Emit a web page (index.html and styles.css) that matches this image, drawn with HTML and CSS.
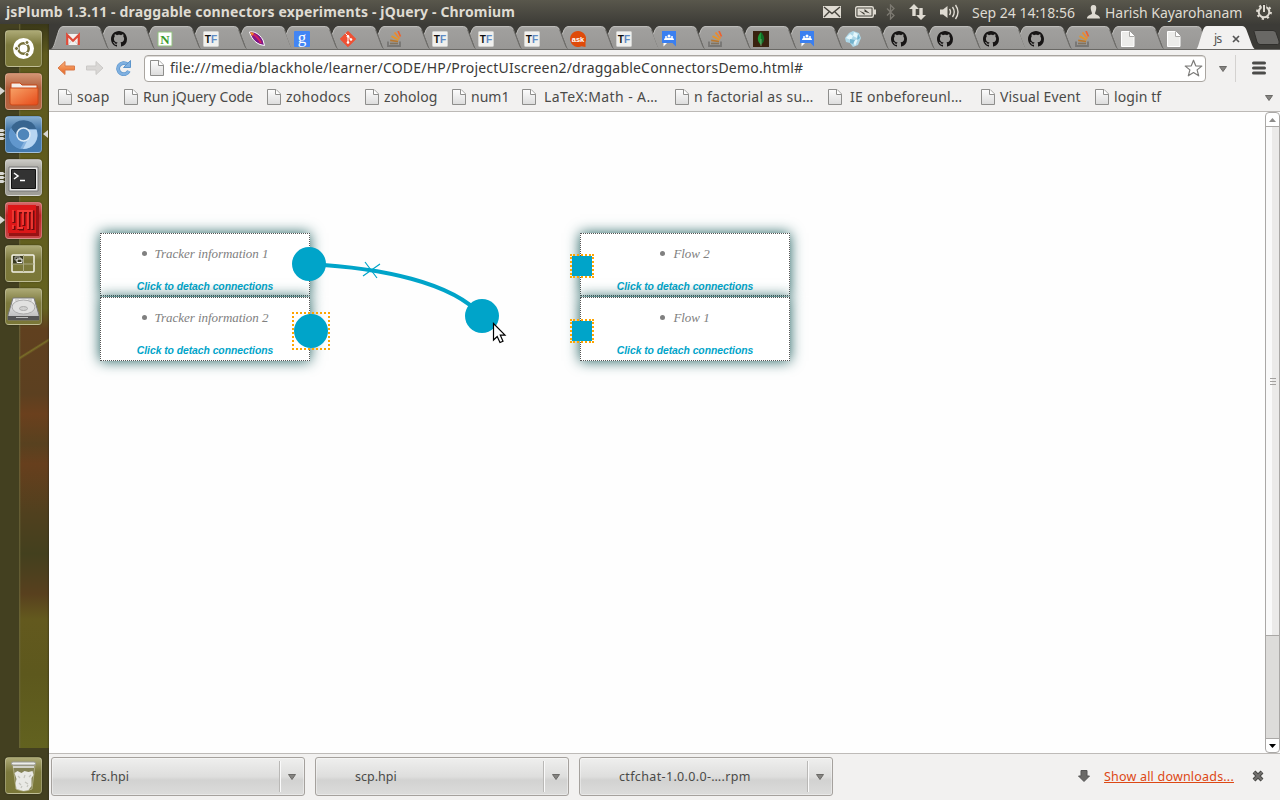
FILE: index.html
```html
<!DOCTYPE html>
<html lang="en">
<head>
<meta charset="utf-8">
<title>jsPlumb 1.3.11 - draggable connectors experiments - jQuery</title>
<link rel="stylesheet" href="styles.css">
</head>
<body>
<svg class="defs" width="0" height="0" aria-hidden="true">
  <defs>
    <linearGradient id="tabFill" x1="0" y1="0" x2="0" y2="1"><stop offset="0" stop-color="#a9a8a6"/><stop offset=".15" stop-color="#a09f9d"/><stop offset="1" stop-color="#989795"/></linearGradient>
    <linearGradient id="pageFill" x1="0" y1="0" x2="0" y2="1"><stop offset="0" stop-color="#fdfdfd"/><stop offset="1" stop-color="#dcdcdc"/></linearGradient>
    <linearGradient id="orange" x1="0" y1="0" x2="0" y2="1"><stop offset="0" stop-color="#f9b27c"/><stop offset="1" stop-color="#e8641f"/></linearGradient>
    <linearGradient id="folder" x1="0" y1="0" x2="1" y2="1"><stop offset="0" stop-color="#f7a267"/><stop offset="1" stop-color="#e64a19"/></linearGradient>
    <linearGradient id="metal" x1="0" y1="0" x2="0" y2="1"><stop offset="0" stop-color="#f4f4f4"/><stop offset="1" stop-color="#b5b5b5"/></linearGradient>
  </defs>
  <symbol id="tab-first" viewBox="0 0 62 24"><path d="M2 23.5C5 22.500 5 20 10 4Q11.500.5 14 .5H47.500Q50 .5 51.500 3.500L57.500 19.500Q59 23 60.500 23.500Z" fill="url(#tabFill)"/><path d="M2.500 23C5 22 6 16 10 4Q11.500.5 14 .5H47.500Q50 .5 51.500 3.500" fill="none" stroke="#bdbcba"/><path d="M51.500 3.500L57.500 19.500Q58.500 22.500 60.500 23.500" fill="none" stroke="#6f6e6b"/></symbol>
  <symbol id="tab-next" viewBox="0 0 62 24"><path d="M14 23.500L12.500 20.500L8 8.500L10 3.500Q11.500.5 14 .5H47.500Q50 .5 51.500 3.500L57.500 19.500Q59 23 60.500 23.500Z" fill="url(#tabFill)"/><path d="M8.500 8L10 4Q11.500.5 14 .5H47.500Q50 .5 51.500 3.500" fill="none" stroke="#bdbcba"/><path d="M51.500 3.500L57.500 19.500Q58.500 22.500 60.500 23.500" fill="none" stroke="#6f6e6b"/></symbol>
  <symbol id="i-gmail" viewBox="0 0 16 16"><path d="M1 3h14v11H1z" fill="#f3f0ee"/><path d="M3 14L7 9M13 14L9 9" stroke="#cfcfcf"/><path d="M2.200 14V4L8 9.700 13.800 4V14" fill="none" stroke="#dd4b39" stroke-width="2.300"/></symbol>
  <symbol id="i-github" viewBox="0 0 16 16"><path fill="#171515" d="M8 0C3.580 0 0 3.580 0 8c0 3.540 2.290 6.530 5.470 7.590.4.070.55-.17.55-.38 0-.19-.01-.82-.01-1.490-2.010.37-2.530-.49-2.690-.94-.09-.23-.48-.94-.82-1.130-.28-.15-.68-.52-.01-.53.63-.01 1.080.58 1.230.82.72 1.210 1.870.87 2.330.66.070-.52.28-.87.51-1.070-1.780-.2-3.640-.89-3.640-3.950 0-.87.31-1.590.82-2.150-.08-.2-.36-1.020.08-2.120 0 0 .67-.21 2.200.82.64-.18 1.320-.27 2-.27s1.360.09 2 .27c1.530-1.040 2.200-.82 2.200-.82.44 1.100.16 1.920.08 2.120.51.56.82 1.270.82 2.150 0 3.070-1.870 3.750-3.650 3.950.29.25.54.73.54 1.480 0 1.070-.01 1.930-.01 2.200 0 .21.15.46.55.38A8.010 8.010 0 0 0 16 8c0-4.420-3.580-8-8-8z"/></symbol>
  <symbol id="i-n" viewBox="0 0 16 16"><path d="M1 1h14v14H1z" fill="#fff" stroke="#8fc07c"/><text x="8" y="12.500" text-anchor="middle" class="g-serif" font-size="13" fill="#3a9a2c">N</text></symbol>
  <symbol id="i-tf" viewBox="0 0 16 16"><rect x=".5" y=".5" width="15" height="15" rx="1" fill="#f0f0ee" stroke="#d2d2d0"/><text x="1.800" y="12" class="g-sans" font-size="11" textLength="12.400" lengthAdjust="spacingAndGlyphs" fill="#111">T<tspan fill="#5e8ac4">F</tspan></text></symbol>
  <symbol id="i-feather" viewBox="0 0 16 16"><path d="M.5 1C4 0 10 2 14 9L15.500 14.500 11 13.500C5 11 2 6 .5 1Z" fill="#7c1688" stroke="#fff"/><path d="M3 3C7 4 10 8 12 12" stroke="#d0225f" stroke-width="2" fill="none"/><path d="M1 1l4 1-2 3z" fill="#f08a24"/></symbol>
  <symbol id="i-google" viewBox="0 0 16 16"><rect width="16" height="16" rx="1" fill="#4285f4"/><text x="8" y="11.500" text-anchor="middle" class="g-thin" font-size="17" fill="#fff">g</text></symbol>
  <symbol id="i-git" viewBox="0 0 16 16"><path d="M8 .3L15.700 8 8 15.700.3 8z" fill="#f05033" stroke="#f05033" stroke-linejoin="round"/><path d="M5.500 2.500L8 5v7M8 5.500L11 8.500" stroke="#fff" fill="none"/><circle cx="8" cy="5.300" r="1.300" fill="#fff"/><circle cx="8" cy="11.500" r="1.300" fill="#fff"/><circle cx="11" cy="8.500" r="1.300" fill="#fff"/></symbol>
  <symbol id="i-so" viewBox="0 0 16 16"><path d="M2 10.500V15H14V10.500" fill="none" stroke="#777674" stroke-width="1.800"/><path d="M4 12.500h8" stroke="#84735c" stroke-width="1.600"/><path d="M4.200 9.300L12 10.500" stroke="#b9772d" stroke-width="1.700"/><path d="M5.500 5.200L12.500 9" stroke="#e2942d" stroke-width="1.900"/><path d="M8.500 1.500L13.500 7.500" stroke="#ee8a2c" stroke-width="1.900"/><path d="M12 0L14.500 5.500" stroke="#f0602d" stroke-width="1.700"/></symbol>
  <symbol id="i-ask" viewBox="0 0 16 16"><path d="M8 0a8 8 0 1 0 3.500 15.200L15.500 16V11A8 8 0 0 0 8 0Z" fill="#df4a0a"/><text x="8" y="10.800" text-anchor="middle" class="g-sans" font-size="7.500" fill="#fff">ask</text></symbol>
  <symbol id="i-groups" viewBox="0 0 16 16"><path d="M1 0h14v15.500L11.500 12H1z" fill="#3a7ff0"/><path d="M2.500 12v3.500L6 12z" fill="#fff"/><g fill="#fff"><circle cx="8" cy="5" r="1.500"/><circle cx="5" cy="6" r="1"/><circle cx="11" cy="6" r="1"/><path d="M3 9c0-3 4-2 5-2s5-1 5 2z"/></g></symbol>
  <symbol id="i-mongo" viewBox="0 0 16 16"><path d="M0 0h16v16H0z" fill="#39220f"/><path d="M8 1C3.500 6 4 10 8 14z" fill="#1e9b38"/><path d="M8 1c4.500 5 4 9 0 13z" fill="#126d27"/><path d="M8 8v7" stroke="#9bb38d" stroke-width=".7"/></symbol>
  <symbol id="i-crystal" viewBox="0 0 16 16"><path d="M0 7L4 2 8 0 14 2 16 7 13 14 8 16 5 12 1 11z" fill="#aed7e7"/><path d="M1 7L5 3 8 5 6 9zM9 1l4 2-1 4-4-2zM8 10l5-2-3 7z" fill="#e5f7fc"/><path d="M5 8l5 1-2 4-3-1zM13 3l2 4-3 2z" fill="#73b3cd"/></symbol>
  <symbol id="i-file" viewBox="0 0 16 16"><path d="M1.500.5h8.500L14.500 5V15.500h-13z" fill="url(#pageFill)" stroke="#8e8e8c"/><path d="M9.500.5V5.500h5" fill="#fff" stroke="#8e8e8c"/></symbol>
  <symbol id="i-filetab" viewBox="0 0 16 16"><path d="M1.500.5h8L14 5V15.500H1.500z" fill="#ececea" stroke="#fff"/><path d="M9.500.5V5.500h5" fill="#fff" stroke="#a9a8a6"/></symbol>
  <symbol id="i-drop" viewBox="0 0 8 6"><path d="M.5.5h7L4 5.500z" fill="#858481" stroke="#6b6a67"/></symbol>
</svg>

<header class="panel">
  <span class="win-title">jsPlumb 1.3.11 - draggable connectors experiments - jQuery - Chromium</span>
  <div class="indicators">
    <svg class="ind mail" viewBox="0 0 18 12"><rect width="18" height="12" fill="#dfdbd2"/><path d="M1 1L9 7.500 17 1M1 11L6 6M17 11L12 6" fill="none" stroke="#45433c" stroke-width="1.400"/></svg>
    <svg class="ind battery" viewBox="0 0 21 12"><rect x=".7" y=".7" width="17.600" height="10.600" rx="1.500" fill="none" stroke="#dfdbd2" stroke-width="1.400"/><path d="M19 3.500h2v5h-2z" fill="#dfdbd2"/><path d="M2.500 2.500h14v7h-14z" fill="#dfdbd2"/><path d="M4 4.500L9.500 7V3L15 7.500 9.500 5.800V9z" fill="#403e37"/></svg>
    <svg class="ind bt" viewBox="0 0 9 16"><path d="M1 4.500L8 11.500 4.500 15V1L8 4.500 1 11.500" fill="none" stroke="#7d7a72" stroke-width="1.300"/></svg>
    <svg class="ind net" viewBox="0 0 17 16"><path d="M5 0L10 5H6.700V12H3.300V5H0zM12 16L7 11h3.300V4h3.400v7H17z" fill="#dfdbd2"/></svg>
    <svg class="ind vol" viewBox="0 0 20 16"><path d="M0 5.500h3L7.500 2v12L3 10.500H0z" fill="#dfdbd2"/><path d="M9.500 5Q11.500 8 9.500 11M12.500 3Q16 8 12.500 13M15.500 1Q20.500 8 15.500 15" fill="none" stroke="#dfdbd2" stroke-width="1.400"/></svg>
    <span class="clock">Sep 24 14:18:56</span>
    <svg class="ind user" viewBox="0 0 13 14"><path d="M6.500 0C9 0 9.500 2 9.200 4 9 6 8 7 8 8.500 8.500 10 13 10 13 13.500H0C0 10 4.500 10 5 8.500 5 7 4 6 3.800 4 3.500 2 4 0 6.500 0Z" fill="#dfdbd2"/></svg>
    <span class="username">Harish Kayarohanam</span>
    <svg class="ind gear" viewBox="0 0 16 16"><circle cx="8" cy="8" r="5.300" fill="none" stroke="#dfdbd2" stroke-width="2"/><circle cx="8" cy="8" r="6.900" fill="none" stroke="#dfdbd2" stroke-width="2" stroke-dasharray="2.200 3.220"/><path d="M5.800 0h4.400v8H5.800z" fill="#47453d"/><path d="M8 1v7" stroke="#dfdbd2" stroke-width="2"/></svg>
  </div>
</header>

<div class="desktop">
<nav class="launcher">
  <div class="tile olive"><svg viewBox="0 0 37 37"><circle cx="18.500" cy="18.500" r="10.500" fill="#fff"/><circle cx="18.500" cy="18.500" r="5.200" fill="none" stroke="#77713b" stroke-width="2.500"/><g fill="#77713b" stroke="#fff"><circle cx="11.500" cy="18.500" r="2"/><circle cx="22" cy="12.500" r="2"/><circle cx="22" cy="24.500" r="2"/></g></svg></div>
  <div class="tile rust"><svg viewBox="0 0 37 37"><path d="M6 10h9l2 2h15v10H6z" fill="#f4eee9" stroke="#c74717"/><path d="M5 15h28v15Q33 32 31 32H7Q5 32 5 30z" fill="url(#folder)" stroke="#ca4818"/></svg><i class="run-left"></i></div>
  <div class="tile blue"><svg viewBox="0 0 37 37"><circle cx="18.500" cy="19" r="14" fill="#86b2de"/><path d="M6 12A14 14 0 0 1 31.500 13H18.500L13 21z" fill="#38658f"/><path d="M18 33L24 21 24 14H31.500A14 14 0 0 1 18 33Z" fill="#b8d6f2"/><path d="M6 12L13 22L19 26 15 33A14 14 0 0 1 6 12" fill="#6197cd"/><circle cx="18.500" cy="18.500" r="6.500" fill="#4f86ba" stroke="#dceaf6" stroke-width="1.500"/></svg><i class="run-multi"></i><i class="active-mark"></i></div>
  <div class="tile grey"><svg viewBox="0 0 37 37"><path d="M4 8h29v24H4z" fill="#e9e9e7" stroke="#777"/><path d="M6.500 10.500h24v19h-24z" fill="#333" stroke="#111"/><path d="M9 14l4 3-4 3M15 21.500h5" fill="none" stroke="#fff" stroke-width="1.500"/></svg><i class="run-multi"></i></div>
  <div class="tile red"><svg viewBox="0 0 37 37"><path d="M4 4h30v30H4z" fill="#981314"/><path d="M3 3h28v28H3z" fill="#dc1718"/><path d="M9 9v12M9 24v4M14 28V10h14v18M19 10v14M24 10v18M14 27h5" fill="none" stroke="#6c0c0d" stroke-width="3"/><path d="M8 8v12M8 23v4M13 27V9h14v18M18 9v14M23 9v18M13 26h5" fill="none" stroke="#f53b35" stroke-width="1.800"/></svg><i class="run-left"></i></div>
  <div class="tile olive"><svg viewBox="0 0 37 37"><path d="M8 11h10v8H8z" fill="#37371e"/><rect x="7" y="10" width="22" height="17" rx="1" fill="none" stroke="#f3f2e8" stroke-width="1.500"/><path d="M18.500 10v17M7 19h22" stroke="#aba984"/><path d="M10 12h5v3h-5z" fill="none" stroke="#aaa"/><path d="M12 14h5v3.500h-5z" fill="#39381e" stroke="#fff"/></svg></div>
  <div class="tile olive"><svg viewBox="0 0 37 37"><path d="M8 10h21l5 17v5H3v-5z" fill="url(#metal)" stroke="#777"/><path d="M3 28h31v4H3z" fill="#555"/><ellipse cx="18.500" cy="19" rx="11.500" ry="7" fill="#e1e1e0" stroke="#aaa"/><ellipse cx="18.500" cy="20.500" rx="4" ry="2" fill="#d0d0cf" stroke="#aaa"/><path d="M10 12h4M23 12h4M11 29.500h12" stroke="#bbb"/></svg></div>
  <div class="tile olive trash"><svg viewBox="0 0 37 37"><path d="M8 8h22l-3 24Q18.500 36 11 32z" fill="#858357" stroke="#adab82"/><path d="M9.500 16l3-2 4 2 3-2 4 1 4-1 1 4-2 3v8l-3 4-5 1-7-2-1-6 1-4z" fill="#e9e9e5"/><path d="M13 19l2 2M20 18l-1 3M24 20l2-2M14 26l2 2M20 25l3 2M22 30l1-2M16 31l1-2" fill="none" stroke="#c4c4bc" stroke-width="1.200"/><rect x="6.500" y="5" width="24" height="3" rx="1.500" fill="#edeee9" stroke="#999"/><path d="M8 10h21" stroke="#d2d2ca" stroke-width="2"/></svg></div>
</nav>

<main class="browser">
  <div class="tabs">
    <div class="tab"><svg class="shape"><use href="#tab-first"/></svg><svg class="fav"><use href="#i-gmail"/></svg></div>
    <div class="tab"><svg class="shape"><use href="#tab-next"/></svg><svg class="fav"><use href="#i-github"/></svg></div>
    <div class="tab"><svg class="shape"><use href="#tab-next"/></svg><svg class="fav"><use href="#i-n"/></svg></div>
    <div class="tab"><svg class="shape"><use href="#tab-next"/></svg><svg class="fav"><use href="#i-tf"/></svg></div>
    <div class="tab"><svg class="shape"><use href="#tab-next"/></svg><svg class="fav"><use href="#i-feather"/></svg></div>
    <div class="tab"><svg class="shape"><use href="#tab-next"/></svg><svg class="fav"><use href="#i-google"/></svg></div>
    <div class="tab"><svg class="shape"><use href="#tab-next"/></svg><svg class="fav"><use href="#i-git"/></svg></div>
    <div class="tab"><svg class="shape"><use href="#tab-next"/></svg><svg class="fav"><use href="#i-so"/></svg></div>
    <div class="tab"><svg class="shape"><use href="#tab-next"/></svg><svg class="fav"><use href="#i-tf"/></svg></div>
    <div class="tab"><svg class="shape"><use href="#tab-next"/></svg><svg class="fav"><use href="#i-tf"/></svg></div>
    <div class="tab"><svg class="shape"><use href="#tab-next"/></svg><svg class="fav"><use href="#i-tf"/></svg></div>
    <div class="tab"><svg class="shape"><use href="#tab-next"/></svg><svg class="fav"><use href="#i-ask"/></svg></div>
    <div class="tab"><svg class="shape"><use href="#tab-next"/></svg><svg class="fav"><use href="#i-tf"/></svg></div>
    <div class="tab"><svg class="shape"><use href="#tab-next"/></svg><svg class="fav"><use href="#i-groups"/></svg></div>
    <div class="tab"><svg class="shape"><use href="#tab-next"/></svg><svg class="fav"><use href="#i-so"/></svg></div>
    <div class="tab"><svg class="shape"><use href="#tab-next"/></svg><svg class="fav"><use href="#i-mongo"/></svg></div>
    <div class="tab"><svg class="shape"><use href="#tab-next"/></svg><svg class="fav"><use href="#i-groups"/></svg></div>
    <div class="tab"><svg class="shape"><use href="#tab-next"/></svg><svg class="fav"><use href="#i-crystal"/></svg></div>
    <div class="tab"><svg class="shape"><use href="#tab-next"/></svg><svg class="fav"><use href="#i-github"/></svg></div>
    <div class="tab"><svg class="shape"><use href="#tab-next"/></svg><svg class="fav"><use href="#i-github"/></svg></div>
    <div class="tab"><svg class="shape"><use href="#tab-next"/></svg><svg class="fav"><use href="#i-github"/></svg></div>
    <div class="tab"><svg class="shape"><use href="#tab-next"/></svg><svg class="fav"><use href="#i-github"/></svg></div>
    <div class="tab"><svg class="shape"><use href="#tab-next"/></svg><svg class="fav"><use href="#i-so"/></svg></div>
    <div class="tab"><svg class="shape"><use href="#tab-next"/></svg><svg class="fav"><use href="#i-filetab"/></svg></div>
    <div class="tab"><svg class="shape"><use href="#tab-next"/></svg><svg class="fav"><use href="#i-filetab"/></svg></div>
    <div class="tab active"><svg class="shape" viewBox="0 0 62 24"><path d="M-1 24C2 23 2 20 7 4Q8.500 0 11 0H46Q49 0 50.500 4L56 19Q58 24 61 24Z" fill="#f2f1f0"/></svg><span class="tab-label">js</span><svg class="tab-close" viewBox="0 0 8 8"><path d="M1 1l6 6M7 1L1 7" stroke="#555" stroke-width="1.700"/></svg></div>
    <svg class="new-tab" viewBox="0 0 27 16"><path d="M1 1.500Q1 .5 3 .5H20Q22 .5 23 2.500L26 11Q27 14.500 24.500 14.500H7Q5 14.500 4 12z" fill="#696865" stroke="#302f2c"/></svg>
  </div>

  <div class="toolbar">
    <svg class="nav-ic" viewBox="0 0 18 16"><path d="M8 1.500L1 8l7 6.500V10H17.500V6H8z" fill="url(#orange)" stroke="#d97b4a" stroke-linejoin="round"/></svg>
    <svg class="nav-ic" viewBox="0 0 18 16"><path d="M10 1.500L17 8l-7 6.500V10H.5V6H10z" fill="#d9d7d5" stroke="#cbc9c7" stroke-linejoin="round"/></svg>
    <svg class="nav-ic reload" viewBox="0 0 17 16"><path d="M12.500 4.500A5.600 5.600 0 1 0 13.800 11" fill="none" stroke="#5d95cb" stroke-width="3.800"/><path d="M12.500 4.500A5.600 5.600 0 1 0 13.800 11" fill="none" stroke="#7fb0e0" stroke-width="2.400"/><path d="M15.500.5V7.500H8.500z" fill="#7fb0e0" stroke="#5d95cb"/></svg>
    <div class="omnibox">
      <svg class="ic16"><use href="#i-file"/></svg>
      <span class="url">file:///media/blackhole/learner/CODE/HP/ProjectUIscreen2/draggableConnectorsDemo.html#</span>
      <svg class="star" viewBox="0 0 19 18"><path d="M9.500 1.200L11.700 6.800 17.800 7.100 13.100 10.900 14.700 16.800 9.500 13.500 4.300 16.800 5.900 10.900 1.200 7.100 7.300 6.800z" fill="#fff" stroke="#7d7c7a" stroke-width="1.200" stroke-linejoin="round"/></svg>
    </div>
    <svg class="drop tool-drop"><use href="#i-drop"/></svg>
    <span class="divider"></span>
    <svg class="burger" viewBox="0 0 14 14"><path d="M1.500 2h11M1.500 7h11M1.500 12h11" stroke="#4b4b49" stroke-width="3" stroke-linecap="round"/></svg>
  </div>

  <div class="bookmarks">
    <a class="bm b1"><svg class="ic16"><use href="#i-file"/></svg><span>soap</span></a>
    <a class="bm b2"><svg class="ic16"><use href="#i-file"/></svg><span>Run jQuery Code</span></a>
    <a class="bm b3"><svg class="ic16"><use href="#i-file"/></svg><span>zohodocs</span></a>
    <a class="bm b4"><svg class="ic16"><use href="#i-file"/></svg><span>zoholog</span></a>
    <a class="bm b5"><svg class="ic16"><use href="#i-file"/></svg><span>num1</span></a>
    <a class="bm b6"><svg class="ic16"><use href="#i-file"/></svg><span>LaTeX:Math - A…</span></a>
    <a class="bm b7"><svg class="ic16"><use href="#i-file"/></svg><span>n factorial as su…</span></a>
    <a class="bm b8"><svg class="ic16"><use href="#i-file"/></svg><span>IE onbeforeunl…</span></a>
    <a class="bm b9"><svg class="ic16"><use href="#i-file"/></svg><span>Visual Event</span></a>
    <a class="bm b10"><svg class="ic16"><use href="#i-file"/></svg><span>login tf</span></a>
    <svg class="drop more"><use href="#i-drop"/></svg>
  </div>

  <div class="viewport">
    <section class="canvas">
      <div class="node left-col row-1"><ul><li>Tracker information 1</li></ul><a>Click to detach connections</a></div>
      <div class="node left-col row-2"><ul><li>Tracker information 2</li></ul><a>Click to detach connections</a></div>
      <div class="node right-col row-1"><ul><li>Flow 2</li></ul><a>Click to detach connections</a></div>
      <div class="node right-col row-2"><ul><li>Flow 1</li></ul><a>Click to detach connections</a></div>
      <span class="droppable source"></span>
      <span class="droppable target-1"></span>
      <span class="droppable target-2"></span>
      <svg class="wires" viewBox="0 0 1216 641">
        <path d="M260 152C332 156 403 170 433 204" fill="none" stroke="#00a4c9" stroke-width="4"/>
        <path d="M316 150L328 166M314 164L331 152" stroke="#00a4c9" stroke-width="1.200"/>
        <circle cx="260" cy="152" r="17" fill="#00a4c9"/>
        <circle cx="262" cy="219" r="17" fill="#00a4c9"/>
        <circle cx="433" cy="204" r="17" fill="#00a4c9"/>
        <path d="M444.500 211.500V228L448.200 224.500 451 230.500 454 229.200 451.300 223.200H456z" fill="#fff" stroke="#000" stroke-width="1.200"/>
      </svg>
    </section>
    <div class="scrollbar">
      <span class="sb-btn"><svg viewBox="0 0 7 4"><path d="M0 4h7L3.500 0z" fill="#8d8c8a"/></svg></span>
      <span class="thumb"><i></i><i></i><i></i></span>
      <span class="track"></span>
      <span class="sb-btn down"><svg viewBox="0 0 7 4"><path d="M0 0h7L3.500 4z" fill="#000"/></svg></span>
    </div>
  </div>

  <footer class="downloads">
    <div class="dl"><span class="name d1">frs.hpi</span><span class="dl-arrow"><svg class="drop"><use href="#i-drop"/></svg></span></div>
    <div class="dl"><span class="name d2">scp.hpi</span><span class="dl-arrow"><svg class="drop"><use href="#i-drop"/></svg></span></div>
    <div class="dl"><span class="name d3">ctfchat-1.0.0.0-….rpm</span><span class="dl-arrow"><svg class="drop"><use href="#i-drop"/></svg></span></div>
    <div class="dl-all">
      <svg class="dl-ic" viewBox="0 0 12 12"><path d="M3 .5h6V6h2.500L6 11.500.5 6H3z" fill="#6a6967" stroke="#555"/></svg>
      <a>Show all downloads...</a>
      <svg class="dl-close" viewBox="0 0 12 12"><path d="M2 2l8 8M10 2l-8 8" stroke="#484745" stroke-width="4"/><path d="M2 2l8 8M10 2l-8 8" stroke="#73716f" stroke-width="2"/></svg>
    </div>
  </footer>
</main>
</div>
</body>
</html>
```
FILE: styles.css
```css
* { box-sizing: border-box; }
body { margin: 0; width: 1280px; height: 800px; overflow: hidden; display: flex; flex-direction: column; font-family: "Noto Sans", "Open Sans", sans-serif; background: #fff; }
svg { display: block; flex: none; }
span, a { white-space: nowrap; }
.defs { position: absolute; }
.g-sans { font-family: "Liberation Sans", sans-serif; font-weight: bold; }
.g-serif { font-family: "Liberation Serif", serif; font-weight: bold; }
.g-thin { font-family: "Liberation Serif", serif; }

.panel { height: 24px; flex: none; display: flex; align-items: center; padding-left: 6px; background: linear-gradient(#59574c, #3d3c37); color: #dfdbd2; }
.win-title { font-size: 14px; font-weight: bold; line-height: 24px; width: 817px; letter-spacing: 0.15px; }
.indicators { display: flex; align-items: center; height: 24px; font-size: 14px; }
.mail { width: 18px; height: 12px; margin-right: 14px; }
.battery { width: 21px; height: 12px; margin-right: 10px; }
.bt { width: 9px; height: 16px; margin-right: 14px; }
.net { width: 17px; height: 16px; margin-right: 14px; }
.vol { width: 20px; height: 16px; margin-right: 12px; }
.clock { width: 115px; }
.user { width: 13px; height: 14px; margin-right: 5px; }
.username { width: 151px; letter-spacing: -0.05px; }
.gear { width: 16px; height: 16px; }

.desktop { display: flex; flex: 1; min-height: 0; }
.launcher { width: 49px; flex: none; display: flex; flex-direction: column; gap: 6px; padding: 6px 7px 6px 5px;
  background:
    linear-gradient(90deg, #0000 47px, #24201866 49px),
    linear-gradient(148deg, #0000 46%, #7a6f28 50%, #0000 55%) 19px 310px / 30px 30px no-repeat,
    linear-gradient(90deg, #6a663a, #0000 2px) 19px 0 / 30px 724px no-repeat,
    linear-gradient(#3a3818 0, #5e5a1d 30px, #605c1d 180px, #656320 284px, #60401f 305px, #5c4020 370px, #6b401d 390px, #58411f 420px, #673f1d 440px, #50401e 490px, #43401e 530px, #58401e 570px, #63591e 595px, #5d581d 650px, #62621f 724px) 19px 0 / 30px 724px no-repeat,
    #434020; }
.tile { position: relative; width: 37px; height: 37px; flex: none; border-radius: 4px; border: 1px solid #ffffff40; box-shadow: 0 0 2px #0006; }
.tile > svg { width: 37px; height: 37px; margin: -1px; }
.olive { background: linear-gradient(#aca975, #7c793d 40%, #7a7737); }
.rust { background: linear-gradient(#d39473, #b15e3a 40%, #b5633f); }
.blue { background: linear-gradient(#87aed0, #4679aa 35%, #447bb0); }
.grey { background: linear-gradient(#cbcac5, #9a9992 35%, #a09f98); }
.red { background: linear-gradient(#d36767, #bd2224 35%, #c74646); }
.trash { margin-top: auto; }
.run-left, .active-mark { position: absolute; width: 0; height: 0; border: 4px solid transparent; top: 13px; }
.run-left { left: -6px; border-left: 5px solid #d8d8d4; border-right: 0; }
.active-mark { right: -7px; border-right: 5px solid #d8d8d4; border-left: 0; }
.run-multi { position: absolute; left: -6px; top: 12px; width: 5px; height: 11px; background: repeating-linear-gradient(#d8d8d4 0 3px, #0000 3px 4px); clip-path: polygon(0 0, 60% 0, 100% 15%, 60% 28%, 60% 36%, 100% 50%, 60% 64%, 60% 72%, 100% 86%, 60% 100%, 0 100%); }

.browser { flex: 1; min-width: 0; display: flex; flex-direction: column; }
.tabs { height: 26px; flex: none; display: flex; padding-top: 2px; background: #3c3b37; border-bottom: 1px solid #696865; overflow: hidden; }
.tab { position: relative; width: 45.880px; flex: none; padding: 6px 0 0 16px; }
.shape { position: absolute; left: 0; top: 0; width: 62px; height: 24px; overflow: visible; }
.fav { position: relative; width: 16px; height: 16px; margin-top: -1px; }
.tab.active { display: flex; width: 57px; height: 24px; padding: 5px 0 0 18px; gap: 10px; align-items: center; }
.tab-label { position: relative; font-size: 12.500px; line-height: 18px; width: 8px; color: #555; letter-spacing: -0.8px; margin-top: -4px; }
.tab-close { position: relative; width: 8px; height: 8px; margin-top: -3px; }
.new-tab { width: 27px; height: 16px; margin-top: 4px; }

.toolbar { height: 36px; flex: none; display: flex; align-items: center; padding-left: 8px; background: #f2f1f0; }
.nav-ic { width: 18px; height: 16px; margin-right: 11px; }
.reload { width: 17px; margin-right: 12px; }
.omnibox { width: 1062px; height: 27px; display: flex; align-items: center; border: 1px solid #a9a5a0; border-radius: 4px; background: #fff; box-shadow: inset 0 1px #dddad7; padding: 0 0 1px 4px; }
.ic16 { width: 16px; height: 16px; }
.url { font-size: 14px; line-height: 20px; color: #3a3a38; margin-left: 5px; width: 1014px; letter-spacing: 0.205px; }
.star { width: 19px; height: 18px; }
.drop { width: 8px; height: 6px; }
.tool-drop { margin: 1px 0 0 13px; }
.divider { width: 1px; height: 27px; background: #d4d2d0; margin: 0 16px 0 8px; }
.burger { width: 14px; height: 14px; }

.bookmarks { height: 26px; flex: none; display: flex; padding: 1px 7px 0 8px; background: #f2f1f0; border-bottom: 1px solid #bcb9b6; font-size: 14px; line-height: 20px; color: #4a4a48; }
.bm { display: flex; gap: 4px; flex: none; height: 20px; align-items: center; }
.bm span { line-height: 20px; }
.b1 { width: 66px; letter-spacing: 0.2px; } .b2 { width: 143px; letter-spacing: -0.08px; } .b3 { width: 98px; letter-spacing: 0.25px; } .b4 { width: 87px; letter-spacing: 0.1px; } .b5 { width: 70px; }
.b6 { width: 153px; letter-spacing: 0.4px; } .b7 { width: 153px; letter-spacing: 0.3px; } .b8 { width: 153px; letter-spacing: 0.25px; } .b9 { width: 114px; letter-spacing: 0.15px; } .b10 { width: 100px; letter-spacing: 0.1px; }
.b6, .b8 { gap: 7px; }
.more { margin: 8px 0 0 auto; }

.viewport { flex: 1; min-height: 0; display: flex; background: #fefefe; }
.canvas { position: relative; width: 1216px; }
.node { position: absolute; width: 210px; height: 63px; border: 1px dotted #555; background: #fff; box-shadow: 0 0 13px #1f5f5f; text-align: center; }
.left-col { left: 51px; } .right-col { left: 531px; }
.row-1 { top: 121px; } .row-2 { top: 185px; height: 64px; }
.node ul { margin: 12px 0 0; padding: 0; list-style: none; font: italic 13px/15px "Liberation Serif", serif; color: #808080; letter-spacing: -0.05px; }
.node li::before { content: ""; display: inline-block; width: 5px; height: 5px; border-radius: 50%; background: #808080; margin-right: 8px; vertical-align: 2px; }
.node a { display: block; margin-top: 20px; font: italic bold 10.400px/12px "Liberation Sans", sans-serif; color: #00a4c9; letter-spacing: -0.06px; }
.droppable { position: absolute; border: 2px dotted orange; }
.source { left: 243px; top: 200px; width: 38px; height: 38px; }
.target-1, .target-2 { left: 521px; width: 24px; height: 24px; background: #00a4c9 padding-box; }
.target-1 { top: 142px; } .target-2 { top: 207px; }
.wires { position: absolute; left: 0; top: 0; width: 1216px; height: 641px; }

.scrollbar { width: 15px; display: flex; flex-direction: column; border: 1px solid #aaa8a6; border-radius: 4px; background: #fff; overflow: hidden; }
.sb-btn { height: 13px; flex: none; display: flex; align-items: center; justify-content: center; }
.sb-btn svg { width: 7px; height: 4px; }
.thumb { height: 510px; border: solid #aaa8a6; border-width: 1px 0; background: linear-gradient(90deg, #fafafa 50%, #ebeae9 50%); display: flex; flex-direction: column; justify-content: center; align-items: center; gap: 2px; }
.thumb i { width: 6px; height: 1px; background: #a3a19f; }
.track { flex: 1; background: #dddcda; }
.down { height: 14px; border-top: 1px solid #aaa8a6; }

.downloads { height: 47px; flex: none; display: flex; align-items: flex-start; gap: 10px; padding: 3px 16px 0 2px; background: #f2f1f0; border-top: 1px solid #bebbb8; font-size: 12.500px; color: #4a4a48; }
.dl { width: 254px; height: 39px; flex: none; display: flex; border: 1px solid #a5a19d; border-radius: 3px; background: linear-gradient(#efefee, #dededd 50%, #d2d2d1 60%, #dcdcdb); box-shadow: inset 0 0 0 1px #ffffff60; }
.name { flex: 1; padding-left: 39px; line-height: 37px; }
.d1 { letter-spacing: 0.1px; }
.d3 { letter-spacing: 0.35px; }
.dl-arrow { width: 24px; height: 31px; margin: 3px 0; padding-right: 2px; border-left: 1px solid #fafafa; box-shadow: -1px 0 #b9b8b6; display: flex; align-items: center; justify-content: center; }
.dl-all { display: flex; align-items: center; margin-left: auto; height: 38px; }
.dl-ic { width: 12px; height: 12px; margin-right: 14px; }
.dl-all a { color: #dd4814; text-decoration: underline; width: 130px; margin-right: 18px; letter-spacing: 0.2px; }
.dl-close { width: 12px; height: 12px; }
```
